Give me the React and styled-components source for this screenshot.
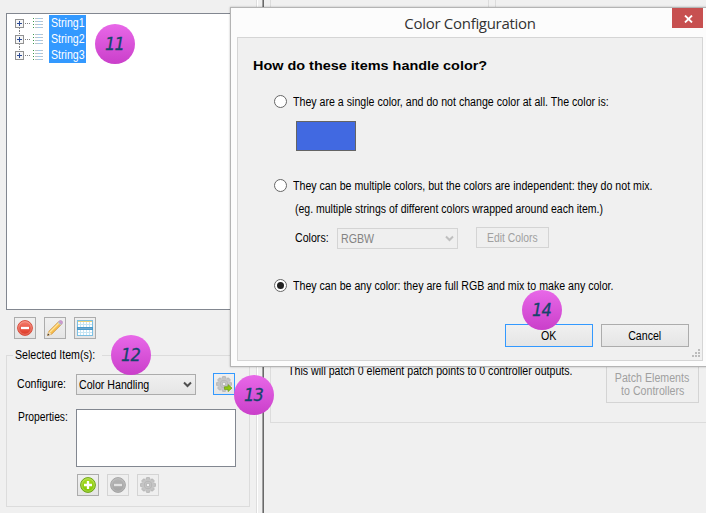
import React from "react";
import styled, { createGlobalStyle, css } from "styled-components";

const GlobalStyle = createGlobalStyle`
  * { box-sizing: border-box; }
  body { margin: 0; background: #f0f0f0; overflow: hidden; }
`;

const Screen = styled.div`
  position: relative;
  display: flex;
  width: 706px;
  height: 513px;
  overflow: hidden;
  background: #f0f0f0;
  color: #000;
  font: 12px/16px "Liberation Sans", Arial, sans-serif;
`;

/* Narrowed sans face used for all of the window's labels. */
const Text = styled.span`
  display: inline-block;
  white-space: nowrap;
  transform: scaleX(${(p) => p.$narrow ?? 0.885});
  transform-origin: ${(p) => (p.$center ? "center" : "left")};
`;

/* ---------- left pane ---------- */

const LeftPane = styled.div`
  display: flex;
  flex-direction: column;
  width: 257px;
  height: 513px;
  padding: 13px 7px 6px 6px;
  border-right: 1px solid #dedede;
`;

const Tree = styled.div`
  height: 297px;
  flex: none;
  padding: 1px 0 0 8px;
  background: #fff;
  border: 1px solid #828790;
`;

const TreeRow = styled.div`
  display: flex;
  align-items: center;
  height: 16px;
`;

const TreeGlyph = styled.svg`
  display: block;
  width: 34px;
  height: 16px;
`;

const TreeLabel = styled.span`
  display: flex;
  height: 16px;
  width: 37px;
  padding-left: 2px;
  background: #3399ff;
  color: #fff;
`;

const ToolRow = styled.div`
  display: flex;
  gap: 8px;
  padding: ${(p) => p.$pad};
`;

const IconButton = styled.button`
  display: flex;
  align-items: center;
  justify-content: center;
  width: 22px;
  height: 22px;
  padding: 0;
  flex: none;
  border: 1px solid ${(p) => (p.$focus ? "#3399ff" : p.$off ? "#d4d4d4" : "#acacac")};
  background: ${(p) => (p.$off ? "#efefef" : "linear-gradient(#f0f0f0, #e5e5e5)")};

  svg { display: block; width: 16px; height: 16px; }
`;

const GroupBox = styled.fieldset`
  width: 244px;
  height: 160px;
  flex: none;
  margin: 8px 0 0;
  padding: 10px 0 0 10px;
  border: 1px solid #dcdcdc;
  min-width: 0;
`;

const Legend = styled.legend`
  height: 16px;
  width: 89px;
  margin-left: -4px;
  padding: 0 0 0 2px;
`;

const Field = styled.div`
  display: flex;
  align-items: flex-start;
  height: ${(p) => p.$height}px;
`;

const FieldLabel = styled.div`
  width: ${(p) => p.$width}px;
  padding: ${(p) => p.$top}px 0 0 ${(p) => p.$left ?? 0}px;
  flex: none;
`;

const Select = styled.div`
  display: flex;
  align-items: center;
  justify-content: space-between;
  width: ${(p) => p.$width}px;
  height: 21px;
  margin-top: 1px;
  padding: 0 3px 0 2px;
  border: 1px solid #acacac;
  background: linear-gradient(#f0f0f0, #e5e5e5);
  ${(p) =>
    p.$off &&
    css`
      padding-left: 3px;
      border-color: #d4d4d4;
      background: #efefef;
      color: #838383;
    `}
  svg { display: block; width: 9px; height: 7px; }
`;

const Spacer = styled.div`
  width: ${(p) => p.$width}px;
`;

const PropertyList = styled.div`
  width: 160px;
  height: 58px;
  border: 1px solid #828790;
  background: #fff;
`;

/* ---------- right pane ---------- */

const Splitter = styled.div`
  width: 13px;
  height: 513px;
  border-left: 1px solid #fff;
  background: linear-gradient(90deg, transparent 4px, #a0a0a0 4px 5px, #696969 5px 6px, transparent 6px);
`;

const RightPane = styled.div`
  display: flex;
  flex-direction: column;
  width: 436px;
`;

const TopPanels = styled.div`
  display: flex;
  gap: 6px;
  height: 40px;
`;

const TopPanel = styled.div`
  flex: none;
  width: ${(p) => p.$width}px;
  border: solid #dcdcdc;
  border-width: 0 1px;
`;

const PatchGroup = styled.div`
  display: flex;
  align-items: flex-start;
  justify-content: space-between;
  height: 63px;
  margin-top: 320px;
  padding: 3px 7px 0 17px;
  border: solid #dcdcdc;
  border-width: 0 0 1px 1px;
`;

const PatchSummary = styled.div`
  width: 300px;
`;

const PatchButton = styled.button`
  display: flex;
  flex: none;
  flex-direction: column;
  align-items: center;
  width: 93px;
  height: 43px;
  margin-top: -3px;
  padding: 11px 0 0;
  border: 1px solid #d4d4d4;
  background: #efefef;
  font: 12px/13px "Liberation Sans", Arial, sans-serif;
  color: #a0a0a0;
`;

/* ---------- dialog ---------- */

const Dialog = styled.section`
  position: absolute;
  left: 230px;
  top: 7px;
  width: 480px;
  height: 360px;
  padding-left: 6px;
  background: #fcfcfc;
  border: 1px solid #b4b4b4;
  box-shadow: 0 0 2px rgba(0, 0, 0, 0.25);
`;

const TitleBar = styled.header`
  display: flex;
  height: 29px;
  width: 466px;
`;

const DialogTitle = styled.h1`
  flex: 1;
  margin: 0;
  padding: 5px 0 0 31px;
  text-align: center;
  font: 400 15px/20px "Open Sans", "Noto Sans", sans-serif;
  letter-spacing: -0.3px;
  color: #333;
`;

const CloseButton = styled.button`
  display: flex;
  align-items: center;
  justify-content: center;
  width: 31px;
  height: 20px;
  padding: 1px 0 0 1px;
  border: 0;
  background: #c75050;
`;

const DialogBody = styled.div`
  display: flex;
  flex-direction: column;
  width: 466px;
  height: 324px;
  padding: 17px 0 0 15px;
  background: #f0f0f0;
  border: 1px solid #d5d5d5;
`;

const Heading = styled.h2`
  margin: 1px 0 18px;
  font: 700 13.33px/20px "Liberation Sans", Arial, sans-serif;
  transform: scaleX(1.083);
  transform-origin: left;
`;

const Option = styled.label`
  display: flex;
  align-items: center;
  height: 16px;
  padding-left: 21px;
  gap: 6px;
`;

const Radio = styled.span`
  display: flex;
  flex: none;
  align-items: center;
  justify-content: center;
  width: 13px;
  height: 13px;
  margin-top: -1px;
  border: 1px solid #666;
  border-radius: 50%;
  background: #fff;

  &::after {
    content: "";
    width: 7px;
    height: 7px;
    border-radius: 50%;
    background: ${(p) => (p.$on ? "#212121" : "transparent")};
  }
`;

const Swatch = styled.div`
  width: 60px;
  height: 30px;
  margin: 11px 0 27px 43px;
  background: #4169e1;
  border: 1px solid #646464;
`;

const Note = styled.div`
  height: 16px;
  margin: 7px 0 10px 42px;
`;

const ColorsRow = styled.div`
  display: flex;
  height: 22px;
  padding-left: 42px;
  margin-bottom: 29px;
`;

const Button = styled.button`
  display: flex;
  align-items: center;
  justify-content: center;
  width: ${(p) => p.$width}px;
  height: ${(p) => p.$height}px;
  padding: 0;
  border: 1px solid ${(p) => (p.$focus ? "#3399ff" : p.$off ? "#d4d4d4" : "#acacac")};
  background: ${(p) => (p.$off ? "#efefef" : "linear-gradient(#f0f0f0, #e5e5e5)")};
  color: ${(p) => (p.$off ? "#a0a0a0" : "#000")};
  font: 12px/16px "Liberation Sans", Arial, sans-serif;
`;

const Actions = styled.div`
  display: flex;
  justify-content: flex-end;
  gap: 8px;
  padding: 30px 13px 0 0;
`;

const Grip = styled.svg`
  display: block;
  width: 8px;
  height: 8px;
  margin: 2px 2px 0 auto;
`;

const Badge = styled.div`
  position: absolute;
  left: ${(p) => p.$x}px;
  top: ${(p) => p.$y}px;
  display: flex;
  align-items: center;
  justify-content: center;
  width: 40px;
  height: 40px;
  padding-right: 1px;
  border-radius: 50%;
  background: linear-gradient(#e868e8, #ca3fca);
  font: italic 18px/20px "DejaVu Sans Condensed", "DejaVu Sans", sans-serif;
  font-stretch: condensed;
  letter-spacing: -0.7px;
  color: #14456b;
  -webkit-text-stroke: 0.3px #14456b;
`;

/* ---------- icons ---------- */

const Chevron = ({ color }) => (
  <svg viewBox="0 0 9 7">
    <path d="M1 1.5 4.5 5 8 1.5" fill="none" stroke={color} strokeWidth="2" />
  </svg>
);

const ListNode = ({ first, last }) => (
  <TreeGlyph viewBox="0 0 34 16" shapeRendering="crispEdges">
    {!first && <path d="M4.5 0v4" stroke="#808080" strokeDasharray="1 1" />}
    {!last && <path d="M4.5 13v3" stroke="#808080" strokeDasharray="1 1" />}
    <rect x="0.5" y="4.5" width="8" height="8" fill="#f6f6f6" stroke="#919191" />
    <path d="M2 8.5h5M4.5 6v5" stroke="#2b4a94" />
    <path d="M10 8.5h6" stroke="#808080" strokeDasharray="1 1" />
    <path d="M18.5 3v10" stroke="#3c9a4a" strokeDasharray="1 2" />
    <path d="M20 3.5h8M20 6.5h8M20 9.5h8M20 12.5h8" stroke="#b9c4cd" />
    <path d="M23 3.5h3M23 6.5h3M23 9.5h3M23 12.5h3" stroke="#a5cbea" />
  </TreeGlyph>
);

const RoundIcon = ({ id, light, dark, rim, plus, mark = "#fff" }) => (
  <svg viewBox="0 0 16 16">
    <defs>
      <linearGradient id={id} x1="0" y1="0" x2="0" y2="1">
        <stop offset="0" stopColor={light} />
        <stop offset="1" stopColor={dark} />
      </linearGradient>
    </defs>
    <circle cx="8" cy="8" r="7.4" fill={`url(#${id})`} stroke={rim} strokeWidth="1" />
    <circle cx="8" cy="8" r="6.3" fill="none" stroke={mark} strokeOpacity="0.35" strokeWidth="0.8" />
    <path d={plus ? "M4 8h8M8 4v8" : "M4 8h8"} stroke={mark} strokeWidth="2.3" />
  </svg>
);

const PencilIcon = () => (
  <svg viewBox="0 0 16 16">
    <path d="M0.5 15.5 1.8 11.4 11.6 1.7 14.4 4.5 4.6 14.2Z" fill="#f6bd4f" stroke="#c88a35" strokeWidth="0.7" />
    <path d="M3 12 12 3" stroke="#ffe49b" strokeWidth="1.3" />
    <path d="M0.5 15.5 1.8 11.4 4.6 14.2Z" fill="#f3dfbd" />
    <path d="M0.4 15.6 1.1 13.5 2.5 14.9Z" fill="#333" />
    <path d="M10.7 2.6 12 1.3 14.8 4.1 13.5 5.4Z" fill="#bcc5cd" />
    <path d="M11.9 1.4 12.8.6Q14 0 15 1 16 2 15.5 3.2L14.7 4.2Z" fill="#ce9bd1" stroke="#ab7bb4" strokeWidth="0.4" />
  </svg>
);

const TableIcon = () => (
  <svg viewBox="0 0 16 16" shapeRendering="crispEdges">
    <rect x="0.5" y="0.5" width="15" height="15" fill="#fff" stroke="#7cc0e4" />
    <rect x="1" y="1" width="14" height="1" fill="#ead27b" />
    <path d="M1 4.5h14M1 12.5h14M3.5 2v13M6.5 2v13M9.5 2v13M12.5 2v13" stroke="#c6e5f3" />
    <rect x="0" y="7" width="16" height="3" fill="#4a9acb" />
    <path d="M1 8.5h14" stroke="#6fa9cf" />
  </svg>
);

const teeth = [0, 45, 90, 135, 180, 225, 270, 315];

const GearIcon = ({ arrow }) => (
  <svg viewBox="0 0 16 16">
    <g fill="#c2c2c2" stroke="#a9a9a9" strokeWidth="0.6">
      {teeth.map((a) => (
        <rect key={a} x="6.2" y="0.5" width="3.6" height="4" rx="0.8" transform={`rotate(${a} 8 8)`} />
      ))}
    </g>
    <circle cx="8" cy="8" r="5.8" fill="#c6c6c6" />
    <circle cx="8" cy="8" r="3.8" fill="none" stroke="#b2b2b2" strokeWidth="0.8" />
    <circle cx="8" cy="8" r="1.8" fill="#efefef" stroke="#a6a6a6" strokeWidth="0.7" />
    {arrow && (
      <path d="M8.5 10.8h3.6V8.6L16 12.1 12.1 15.6v-2.2H8.5Z" fill="#91c812" stroke="#6c9c10" strokeWidth="0.7" />
    )}
  </svg>
);

const strings = ["String1", "String2", "String3"];

const badges = [
  { n: 11, x: 95, y: 24 },
  { n: 12, x: 111, y: 335 },
  { n: 13, x: 234, y: 375 },
  { n: 14, x: 522, y: 290 },
];

export default function App() {
  return (
    <>
      <GlobalStyle />
      <Screen>
        <LeftPane>
          <Tree>
            {strings.map((name, i) => (
              <TreeRow key={name}>
                <ListNode first={i === 0} last={i === strings.length - 1} />
                <TreeLabel>
                  <Text>{name}</Text>
                </TreeLabel>
              </TreeRow>
            ))}
          </Tree>
          <ToolRow $pad="7px 0 0 8px">
            <IconButton>
              <RoundIcon id="remove" light="#f58070" dark="#dc3320" rim="#d8503f" />
            </IconButton>
            <IconButton>
              <PencilIcon />
            </IconButton>
            <IconButton>
              <TableIcon />
            </IconButton>
          </ToolRow>
          <GroupBox>
            <Legend>
              <Text>Selected Item(s):</Text>
            </Legend>
            <Field $height={36}>
              <FieldLabel $width={59} $top={3}>
                <Text>Configure:</Text>
              </FieldLabel>
              <Select $width={120}>
                <Text>Color Handling</Text>
                <Chevron color="#505050" />
              </Select>
              <Spacer $width={17} />
              <IconButton $focus>
                <GearIcon arrow />
              </IconButton>
            </Field>
            <Field $height={58}>
              <FieldLabel $width={59} $top={0} $left={1}>
                <Text $narrow={0.86}>Properties:</Text>
              </FieldLabel>
              <PropertyList />
            </Field>
            <ToolRow $pad="7px 0 0 60px">
              <IconButton>
                <RoundIcon id="add" plus light="#a9dc25" dark="#80c500" rim="#6fa51b" />
              </IconButton>
              <IconButton $off>
                <RoundIcon id="removeOff" light="#b5b5b5" dark="#a3a3a3" rim="#a6a6a6" mark="#e2e2e2" />
              </IconButton>
              <IconButton $off>
                <GearIcon />
              </IconButton>
            </ToolRow>
          </GroupBox>
        </LeftPane>
        <Splitter />
        <RightPane>
          <TopPanels>
            <TopPanel $width={219} />
            <TopPanel $width={220} />
          </TopPanels>
          <PatchGroup>
            <PatchSummary>
              <Text>This will patch 0 element patch points to 0 controller outputs.</Text>
            </PatchSummary>
            <PatchButton>
              <Text $center>Patch Elements</Text>
              <Text $center>to Controllers</Text>
            </PatchButton>
          </PatchGroup>
        </RightPane>

        <Dialog>
          <TitleBar>
            <DialogTitle>Color Configuration</DialogTitle>
            <CloseButton>
              <svg width="9" height="8" viewBox="0 0 9 8">
                <path d="M1 0.5 8 7.5M8 0.5 1 7.5" stroke="#fff" strokeWidth="1.8" />
              </svg>
            </CloseButton>
          </TitleBar>
          <DialogBody>
            <Heading>How do these items handle color?</Heading>
            <Option>
              <Radio />
              <Text>They are a single color, and do not change color at all. The color is:</Text>
            </Option>
            <Swatch />
            <Option>
              <Radio />
              <Text>They can be multiple colors, but the colors are independent: they do not mix.</Text>
            </Option>
            <Note>
              <Text $narrow={0.875}>(eg. multiple strings of different colors wrapped around each item.)</Text>
            </Note>
            <ColorsRow>
              <FieldLabel $width={42} $top={3}>
                <Text>Colors:</Text>
              </FieldLabel>
              <Select $width={121} $off>
                <Text>RGBW</Text>
                <Chevron color="#bfbfbf" />
              </Select>
              <Spacer $width={18} />
              <Button $width={73} $height={21} $off>
                <Text $center $narrow={0.86}>Edit Colors</Text>
              </Button>
            </ColorsRow>
            <Option>
              <Radio $on />
              <Text>They can be any color: they are full RGB and mix to make any color.</Text>
            </Option>
            <Actions>
              <Button $width={88} $height={23} $focus>
                <Text $center>OK</Text>
              </Button>
              <Button $width={88} $height={23}>
                <Text $center>Cancel</Text>
              </Button>
            </Actions>
            <Grip viewBox="0 0 8 8" shapeRendering="crispEdges" fill="#bcbcbc">
              <path d="M6 0h2v2H6zM3 3h2v2H3zM6 3h2v2H6zM0 6h2v2H0zM3 6h2v2H3zM6 6h2v2H6z" />
            </Grip>
          </DialogBody>
        </Dialog>

        {badges.map((b) => (
          <Badge key={b.n} $x={b.x} $y={b.y}>
            {b.n}
          </Badge>
        ))}
      </Screen>
    </>
  );
}
